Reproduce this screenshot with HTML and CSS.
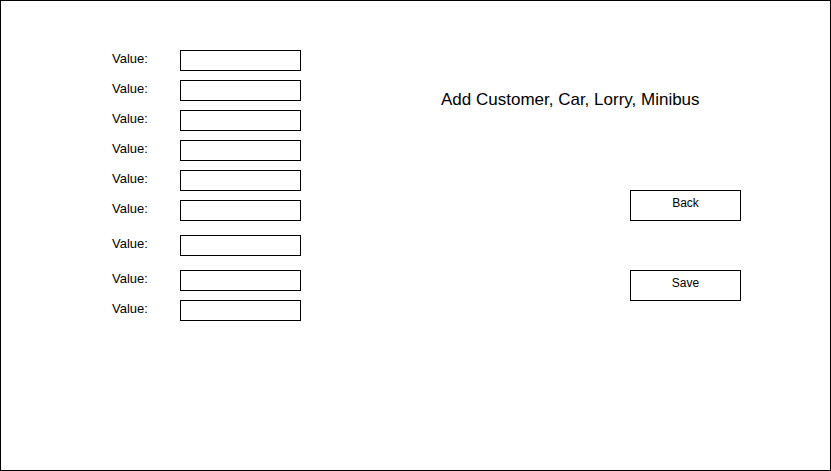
FILE: index.html
```html
<!DOCTYPE html>
<html lang="en">
<head>
<meta charset="utf-8">
<title>Add Customer, Car, Lorry, Minibus</title>
<link rel="stylesheet" href="styles.css">
</head>
<body>
<div class="frame">
  <form class="form">
    <div class="row"><label class="label">Value:</label><input class="field" type="text"></div>
    <div class="row"><label class="label">Value:</label><input class="field" type="text"></div>
    <div class="row"><label class="label">Value:</label><input class="field" type="text"></div>
    <div class="row"><label class="label">Value:</label><input class="field" type="text"></div>
    <div class="row"><label class="label">Value:</label><input class="field" type="text"></div>
    <div class="row"><label class="label">Value:</label><input class="field" type="text"></div>
    <div class="row row-wide"><label class="label">Value:</label><input class="field" type="text"></div>
    <div class="row row-wide"><label class="label">Value:</label><input class="field" type="text"></div>
    <div class="row"><label class="label">Value:</label><input class="field" type="text"></div>
  </form>
  <div class="side">
    <div class="title">Add Customer, Car, Lorry, Minibus</div>
    <div class="actions">
      <button class="btn" type="button">Back</button>
      <button class="btn" type="button">Save</button>
    </div>
  </div>
</div>
</body>
</html>
```

FILE: styles.css
```css
html, body {
  margin: 0;
  padding: 0;
  background: #ffffff;
}

body {
  font-family: "Liberation Sans", Arial, Helvetica, sans-serif;
  color: #000000;
}

.frame {
  box-sizing: border-box;
  width: 831px;
  height: 471px;
  border: 1px solid #000000;
  display: flex;
  align-items: flex-start;
  padding: 49px 0 0 111px;
}

.form {
  display: flex;
  flex-direction: column;
  gap: 9px;
  margin: 0;
}

.row {
  display: flex;
  align-items: flex-start;
  height: 21px;
}

.row-wide {
  margin-top: 5px;
}

.label {
  width: 68px;
  font-size: 13px;
  line-height: 17px;
}

.field {
  box-sizing: border-box;
  width: 121px;
  height: 21px;
  margin: 0;
  padding: 0 4px;
  border: 1px solid #000000;
  border-radius: 0;
  background: #ffffff;
  font-family: inherit;
  font-size: 12px;
  outline: none;
}

.side {
  display: flex;
  flex-direction: column;
  padding-left: 140px;
}

.title {
  margin-top: 40px;
  font-size: 17px;
  line-height: 20px;
  white-space: nowrap;
}

.actions {
  display: flex;
  flex-direction: column;
  gap: 49px;
  margin-top: 80px;
  margin-left: 189px;
}

.btn {
  box-sizing: border-box;
  width: 111px;
  height: 31px;
  margin: 0;
  padding: 0 0 5px;
  border: 1px solid #000000;
  border-radius: 0;
  background: #ffffff;
  color: #000000;
  font-family: inherit;
  font-size: 12px;
  line-height: 14px;
  text-align: center;
  display: block;
}

.btn:focus {
  outline: none;
}
```
